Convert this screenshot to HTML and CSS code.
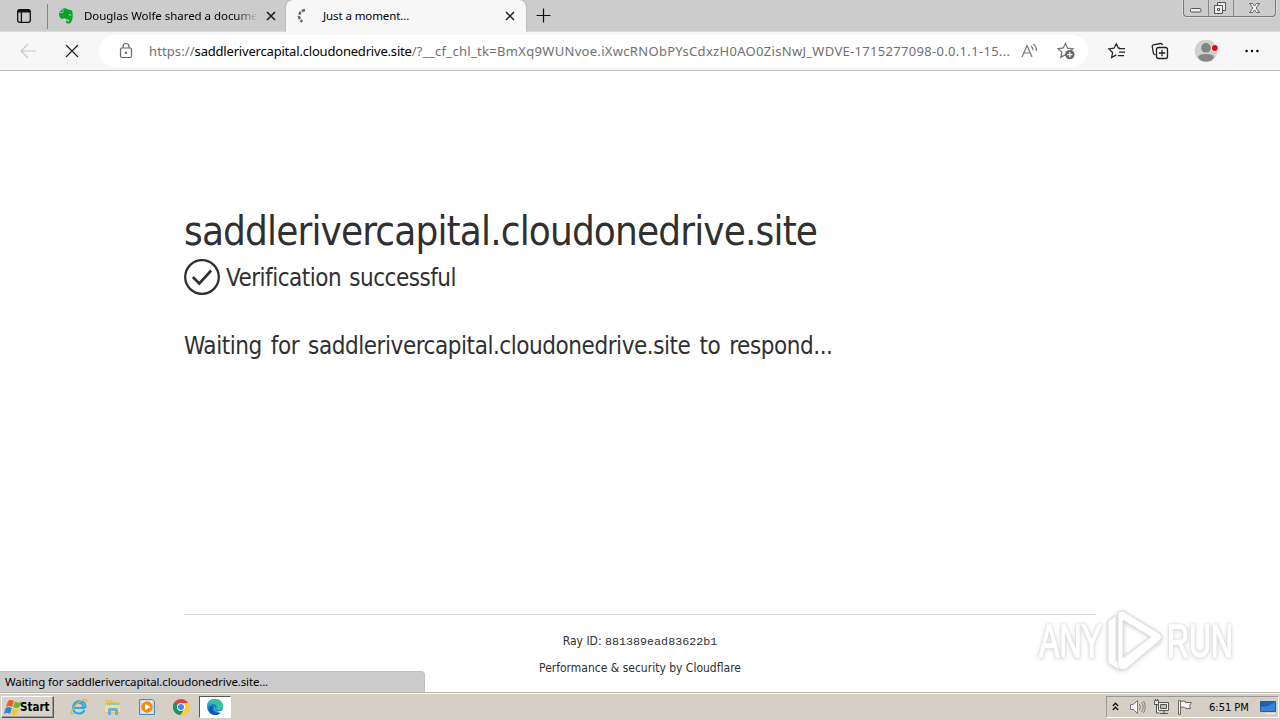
FILE: index.html
```html
<!DOCTYPE html>
<html lang="en">
<head>
<meta charset="utf-8">
<title>Just a moment...</title>
<link rel="stylesheet" href="styles.css">
</head>
<body>
<div class="screen">
  <header class="tabstrip">
    <div class="workspace"><svg width="16" height="16" viewBox="0 0 16 16" fill="none" stroke="#111" stroke-width="1.3"><rect x="1.7" y="1.7" width="12.6" height="12.6" rx="2"/><path d="M2 3.2h12" stroke-width="2.6"/><path d="M5.4 4v10"/></svg></div>
    <div class="tab">
      <svg class="fav" width="16" height="18" viewBox="0 0 16 18"><path d="M5 1.5L1 5.5Q.5 9 2.500 11.200Q4.500 12.300 7 11.300Q8 13 11 12.700Q11.800 14.300 10.500 14.500Q9 14.300 9.300 13.500Q7.500 13.200 8 15.500Q9 17 12 16.300Q15 14.500 14.700 7Q14.600 3.700 13.600 3.300L10 2.500Q8 .5 5 1.500z" fill="#08a52d"/><path d="M1.200 5.500H5V1.700" fill="none" stroke="#ccc" stroke-width=".7"/><path d="M11 8q1.400-.9 2 .5" fill="none" stroke="#dfffe0"/></svg>
      <span class="tab-title faded">Douglas Wolfe shared a documen</span>
      <svg class="close" width="10" height="10" viewBox="0 0 10 10"><path d="M1 1l8 8M9 1L1 9" stroke="#222" stroke-width="1.7"/></svg>
    </div>
    <div class="tab active">
      <svg class="fav" width="16" height="16" viewBox="0 0 16 16" fill="none" stroke="#666" stroke-width="2.500"><path d="M9 2.300Q3.500 2.500 3 8.500Q3.300 11.500 6.300 13.700" stroke-dasharray="3.200 1.300"/></svg>
      <span class="tab-title">Just a moment...</span>
      <svg class="close" width="10" height="10" viewBox="0 0 10 10"><path d="M1 1l8 8M9 1L1 9" stroke="#222" stroke-width="1.500"/></svg>
    </div>
    <svg class="plus" width="15" height="15" viewBox="0 0 15 15"><path d="M7.500 .5v14M.5 7.500h14" stroke="#111" stroke-width="1.200"/></svg>
    <div class="winbuttons">
      <span class="wb"><svg width="24" height="16" viewBox="0 0 24 16"><rect x="6.500" y="8.500" width="10.500" height="3.500" rx="1" fill="#eee" stroke="#555"/></svg></span>
      <span class="wb"><svg width="24" height="16" viewBox="0 0 24 16" fill="#eee" stroke="#555"><path d="M8.500 2.500h8v8h-8z"/><path d="M5.500 5.500h8v8h-8z"/><path d="M8.500 8.500h2v2h-2z"/></svg></span>
      <span class="wb"><svg width="41" height="16" viewBox="0 0 41 16"><path d="M15.500 3.500h3l2 2.500 2-2.500h3l-3.300 4.500 3.300 4.500h-3l-2-2.500-2 2.500h-3l3.300-4.500z" fill="#eee" stroke="#666"/></svg></span>
    </div>
  </header>
  <nav class="toolbar">
    <svg class="back" width="17" height="16" viewBox="0 0 17 16" fill="none" stroke="#c9c9c9" stroke-width="1.200"><path d="M16 8H1M8 1L1 8l7 7"/></svg>
    <svg class="stop" width="14" height="14" viewBox="0 0 14 14"><path d="M1 1l12 12M13 1L1 13" stroke="#222" stroke-width="1.200"/></svg>
    <div class="address">
      <svg class="lock" width="14" height="16" viewBox="0 0 14 16" fill="none" stroke="#666" stroke-width="1.200"><rect x="1.500" y="5" width="11" height="9.500" rx="1.500"/><path d="M4 5V3.500a3 3 0 0 1 6 0V5"/><circle cx="7" cy="9.800" r=".6" fill="#666"/></svg>
      <span class="url"><span class="u1">https://</span><span class="u2">saddlerivercapital.cloudonedrive.site</span><span class="u3">/?__cf_chl_tk=BmXq9WUNvoe.iXwcRNObPYsCdxzH0AO0ZisNwJ_WDVE-1715277098-0.0.1.1-15...</span></span>
      <svg class="read" width="17" height="16" viewBox="0 0 17 16" fill="none" stroke="#777" stroke-width="1.200"><path d="M1 14L6 2.500l5 11.500M2.800 10h6.400M10 3q2 1.200 2 4.500M12 1q3.500 2 3.500 7"/></svg>
      <svg class="addfav" width="19" height="18" viewBox="0 0 19 18"><path d="M8.500 1.500l2.100 4.600 5.400.7-4 3.500 1 5-4.500-2.600-4.700 2.600 1-5.200-3.800-3.500 5.300-.7z" fill="none" stroke="#707070" stroke-width="1.200"/><circle cx="12.800" cy="12.600" r="4.700" fill="#686868"/><path d="M12.800 10v5.200M10.200 12.600h5.200" stroke="#fff" stroke-width="1.200"/></svg>
    </div>
    <svg class="favorites" width="18" height="18" viewBox="0 0 18 18" fill="none" stroke="#222" stroke-width="1.250"><path d="M12 6H10.400L8.300 1.800 6 6.200.9 7l3.700 3.500-1 5 4.700-2.600M11 6.500h6M11 10h6M10 13.500h6"/></svg>
    <svg class="collections" width="18" height="18" viewBox="0 0 18 18" fill="none" stroke="#222" stroke-width="1.300"><path d="M4.500 13L2.500 11.700 1.200 4.500Q1 3.200 2.500 2.800L9.500 1.500Q11 1.300 11.500 3"/><rect x="5.500" y="5.500" width="11" height="11" rx="2"/><path d="M11 7.800v6.400M7.800 11h6.400"/></svg>
    <svg class="profile" width="24" height="24" viewBox="0 0 24 24"><circle cx="12" cy="12" r="11.300" fill="#d0d0cc"/><circle cx="12" cy="8.800" r="4.800" fill="#858585"/><path d="M4 18q1-3 8-3t8 3q-2 4.500-8 4.500t-8-4.500" fill="#858585"/><circle cx="20.800" cy="9" r="3.500" fill="#f7f7f7"/><circle cx="20.800" cy="9" r="2.900" fill="#e00a17"/></svg>
    <svg class="dots" width="14" height="4" viewBox="0 0 14 4"><circle cx="1.600" cy="2" r="1.200"/><circle cx="7" cy="2" r="1.200"/><circle cx="12.400" cy="2" r="1.200"/></svg>
  </nav>
  <main class="page">
    <section class="challenge">
      <h1>saddlerivercapital.cloudonedrive.site</h1>
      <div class="verified"><svg width="36" height="36" viewBox="0 0 36 36" fill="none" stroke="#303030"><circle cx="18" cy="18" r="16.800" stroke-width="2.300"/><path d="M8.800 18l6.500 6.500L27.200 11.500" stroke-width="2.600"/></svg><span>Verification successful</span></div>
      <p class="waiting">Waiting for saddlerivercapital.cloudonedrive.site to respond...</p>
    </section>
    <footer class="foot">
      <div class="ray"><span>Ray ID:</span> <code>881389ead83622b1</code></div>
      <div class="perf">Performance &amp; security by Cloudflare</div>
    </footer>
    <div class="status"><span>Waiting for saddlerivercapital.cloudonedrive.site...</span></div>
    <div class="watermark">
      <span class="any">ANY</span>
      <svg width="60" height="64" viewBox="0 0 60 64" fill="#fff" fill-rule="evenodd" stroke="#e2e2e2" stroke-width="1"><path d="M3 12L11 7V52L52 28 55 33 13 60 3 54z"/><path d="M13 4q4-4 8 0L54 24q5 4 0 8L21 60q-6 3-8-4zM18 11v38L46 28z"/></svg>
      <span class="run">RUN</span>
    </div>
  </main>
  <div class="taskbar">
    <div class="start"><svg width="19" height="17" viewBox="0 0 19 17"><path d="M4 2q3-2 6 0L8 8Q5 6 2 8z" fill="#ee5b23"/><path d="M11 2.500q3 2 6.500 0L15.500 8q-3 2-6.500 0z" fill="#72b52c"/><path d="M1.700 9q3-2 6 0L6 15q-3-2-6 0z" fill="#278bd0"/><path d="M8.700 9.300q3 2 6.300 0L13 15q-3 2-6 0z" fill="#f7c52c"/></svg><b>Start</b></div>
    <svg class="ie" width="18" height="18" viewBox="0 0 18 18" fill="none"><path d="M15 10H4Q4 5 9 4.700q4 .5 4 4.500M14.500 12q-2 4-6 3.500Q2.500 15 3 9q1-6 7-6 6 .8 5.500 7" stroke="#36a7dc" stroke-width="2.100"/><path d="M4 15q-4 3-2.500-1.500Q5 5 14 1.500q4-1 2 3" stroke="#e7b638" stroke-width="1.300"/></svg>
    <svg class="folder" width="18" height="18" viewBox="0 0 18 18"><path d="M2 2h6l1 2h7v11H1V4z" fill="#e9c45c"/><path d="M3 5h12v5H3z" fill="#8ecbb4"/><path d="M1 7h15v7H1z" fill="#f5df8d"/><path d="M4 17v-6q0-1 2-1h6q2 0 2 1v6h-3v-4H7v4z" fill="#6dafd8"/></svg>
    <svg class="media" width="18" height="18" viewBox="0 0 18 18"><path d="M1.500 1.500h13l2 2v13h-15z" fill="#c8ddea" stroke="#4d8db8"/><rect x="4" y="3" width="10" height="12" fill="#e8eff4"/><circle cx="9" cy="9" r="5.700" fill="#f28a12"/><path d="M7 5.700L12.500 9 7 12.300z" fill="#fff"/></svg>
    <svg class="chrome" width="18" height="18" viewBox="0 0 18 18"><circle cx="9" cy="9" r="8" fill="#db4437"/><path d="M9 9L2 5a8 8 0 0 0 6.500 12L12 11z" fill="#0f9d58"/><path d="M9 5h7.900A8 8 0 0 1 8.500 17L12.500 11z" fill="#ffcd40"/><circle cx="9" cy="9" r="4" fill="#fff"/><circle cx="9" cy="9" r="3" fill="#4285f4"/></svg>
    <div class="edgebtn"><svg width="18" height="18" viewBox="0 0 18 18"><circle cx="9" cy="9" r="8" fill="#1682ce"/><path d="M1 9Q1 1 9 1t8 7.500Q17 12 12.500 12.200 9.500 12 10.500 10 11.500 7 8 6 4 5.500 1 9z" fill="#35c79b"/><path d="M1 9Q1 3 7 1.400 3 5 7 6 4 5.500 1 9z" fill="#20afd7"/><path d="M7 8q-2 6 3.500 7 3 .5 5-1.300Q13 17 9 17 3 16 3 11q1-3 4-3" fill="#1355a0"/><path d="M8 8q-.5 5 5 5.500l4-1.500 1 2-2 1Q9 15 8 8" fill="#fff"/></svg></div>
    <div class="tray">
      <svg class="chev" width="7" height="9" viewBox="0 0 7 9" fill="none" stroke="#111" stroke-width="1.400"><path d="M.8 3l2.700-2.700L6.200 3M.8 7l2.700-2.700L6.200 7"/></svg>
      <svg class="sound" width="17" height="16" viewBox="0 0 17 16" fill="#fff" stroke="#777"><path d="M1.500 5.500h3l4-4v13l-4-4h-3z"/><path d="M10.500 5q2 3 0 6M12.500 3q3.500 5 0 10M14.500 2q3.500 6 0 12" fill="none" stroke-width=".9"/></svg>
      <svg class="network" width="17" height="16" viewBox="0 0 17 16" fill="#eee" stroke="#555"><path d="M5.500 3.500h10v8h-10z"/><path d="M7.500 5.500h6v4h-6z" fill="#bbb"/><path d="M7 14.500h8M11 12v2"/><path d="M1.500 1.500h4v4h-4zM2.500 0v2M4.500 0v2M3.500 6v8h3"/></svg>
      <svg class="flag" width="17" height="16" viewBox="0 0 17 16" fill="#f5f5f5" stroke="#666"><path d="M3.500 2.500q3-1 5 0v1h6l-2 3 1 3q-4 1-6-1-2-1-4 0z"/><path d="M1.500 1.500h2v14h-2z"/></svg>
      <span class="clock">6:51 PM</span>
      <svg class="desk" width="16" height="15" viewBox="0 0 16 15"><path d="M.5 1.500h15v10H.5z" fill="#1d5fbb" stroke="#315a8c"/><path d="M1 7Q8 7 15 2v9H1z" fill="#3484dc"/><path d="M5 13.500h10" stroke="#eee"/></svg>
    </div>
  </div>
</div>
</body>
</html>
```
FILE: styles.css
```css
* { box-sizing: border-box; }
body { margin: 0; background: #fff; }
svg { display: block; flex: none; overflow: visible; }
.screen { width: 1280px; height: 720px; display: flex; flex-direction: column; overflow: hidden; font-family: "Noto Sans", sans-serif; font-size: 11.5px; color: #000; white-space: nowrap; }
.tabstrip { height: 32px; flex: none; display: flex; background: #ccc; border-bottom: 1px solid #d9d9d9; }
.workspace { width: 48px; height: 25px; margin-top: 4px; padding: 4px 0 0 16px; border-right: 1px solid #858585; }
.tab { width: 238px; display: flex; align-items: center; padding: 0 10px 0 10px; }
.tab.active { width: 240px; background: #f7f7f7; border-radius: 7px 7px 0 0; height: 32px; box-shadow: 0 0 2px #999; clip-path: inset(0 -3px 0 -3px); padding-right: 11px; }
.tab-title { flex: 1; margin-left: 10px; letter-spacing: -.1px; }
.tab.active .tab-title { margin: -2px 0 0 11px; }
.faded { margin-right: 1px; min-width: 0; letter-spacing: -.04px; -webkit-mask-image: linear-gradient(90deg, #000 84%, transparent 96%); }
.plus { margin: 8px 0 0 10px; }
.winbuttons { display: flex; height: 17px; margin: 0 4px 0 auto; border: 1px solid #777; border-top: 0; border-radius: 0 0 4px 4px; box-shadow: 0 0 0 1px #dedede; }
.wb + .wb { border-left: 1px solid #888; }
.toolbar { height: 39px; flex: none; display: flex; align-items: center; background: #f7f7f7; border-bottom: 1px solid #bfbfbf; }
.back { margin-left: 20px; }
.stop { margin-left: 28px; }
.address { width: 989px; height: 32px; margin-left: 20px; border-radius: 16px; background: #fff; display: flex; align-items: center; padding-left: 20px; }
.url { width: 862px; margin-left: 16px; font-size: 13px; color: #707070; display: flex; }
.u1 { letter-spacing: .1px; }
.u2 { color: #000; letter-spacing: -.19px; }
.u3 { letter-spacing: .31px; }
.read { margin-left: 10px; }
.addfav { margin-left: 19px; }
.favorites { margin-left: 20px; }
.collections { margin-left: 25px; }
.profile { margin-left: 25px; }
.dots { margin-left: 27px; }
.page { position: relative; flex: 1; padding: 0 184px; color: #303030; font-family: "DejaVu Sans Condensed", "DejaVu Sans", sans-serif; font-stretch: condensed; }
.challenge { height: 543px; padding-top: 130px; }
h1 { margin: 0; font-size: 40px; line-height: 60px; font-weight: 400; letter-spacing: -.86px; }
.verified { display: flex; align-items: center; margin-top: -2px; height: 36px; font-size: 24px; gap: 6px; letter-spacing: -.5px; word-spacing: 1.8px; }
.verified span { padding-top: 2px; }
.waiting { margin: 33px 0 0; font-size: 24px; line-height: 36px; letter-spacing: -.45px; word-spacing: 2.6px; }
.foot { width: 912px; border-top: 1px solid #d5d5d5; padding-top: 17px; display: flex; flex-direction: column; align-items: center; font-size: 12px; line-height: 18px; }
.perf { margin-top: 8px; }
code { font-family: "Liberation Mono", monospace; font-size: 11.7px; }
.status { position: absolute; left: 0; bottom: 0; width: 425px; height: 21px; padding: 1px 5px; background: #ccc; border: 1px solid #c0c0c0; border-width: 1px 1px 0 0; border-radius: 0 4px 0 0; color: #000; font-family: "Noto Sans", sans-serif; line-height: 18px; letter-spacing: -.14px; }
.watermark { position: absolute; left: 1039px; top: 538px; height: 64px; display: flex; align-items: center; color: #fff; font: 400 47px/64px "Liberation Sans", sans-serif; -webkit-text-stroke: 1.5px #fff; filter: drop-shadow(0 0 1px #d4d4d4) drop-shadow(0 1px 2px #ddd); }
.any, .run { display: block; width: 66px; transform: scaleX(.65); transform-origin: 0 50%; }
.run { margin-left: 2px; }
.taskbar { height: 28px; flex: none; display: flex; align-items: center; background: #d5cfc6; border-top: 1px solid #b8b3aa; box-shadow: inset 0 1px #fff; padding: 2px 1px 1px 1px; }
.start { width: 53px; height: 22px; display: flex; align-items: center; padding-left: 2px; background: #d8d2ca; border: 1px solid; border-color: #fff #555 #555 #fff; box-shadow: inset -1px -1px #999; font: 11px "DejaVu Sans Condensed", "DejaVu Sans", sans-serif; }
.start b { margin-left: -3px; font-size: 11.5px; }
.ie { margin-left: 16px; }
.folder, .media, .chrome { margin-left: 16px; }
.edgebtn { width: 32px; height: 22px; margin-left: 9px; padding: 1px 6px; background: #fff; border: 1px solid; border-color: #555 #fff #fff #555; }
.tray { width: 173px; height: 22px; margin-left: auto; border: 1px solid; border-color: #999 #fff #fff #999; display: flex; align-items: center; padding-left: 5px; }
.sound { margin-left: 10px; }
.network, .flag { margin-left: 7px; }
.clock { width: 42px; margin-left: 15px; font: 11px "DejaVu Sans Condensed", "DejaVu Sans", sans-serif; }
.desk { margin-left: 9px; }
```
